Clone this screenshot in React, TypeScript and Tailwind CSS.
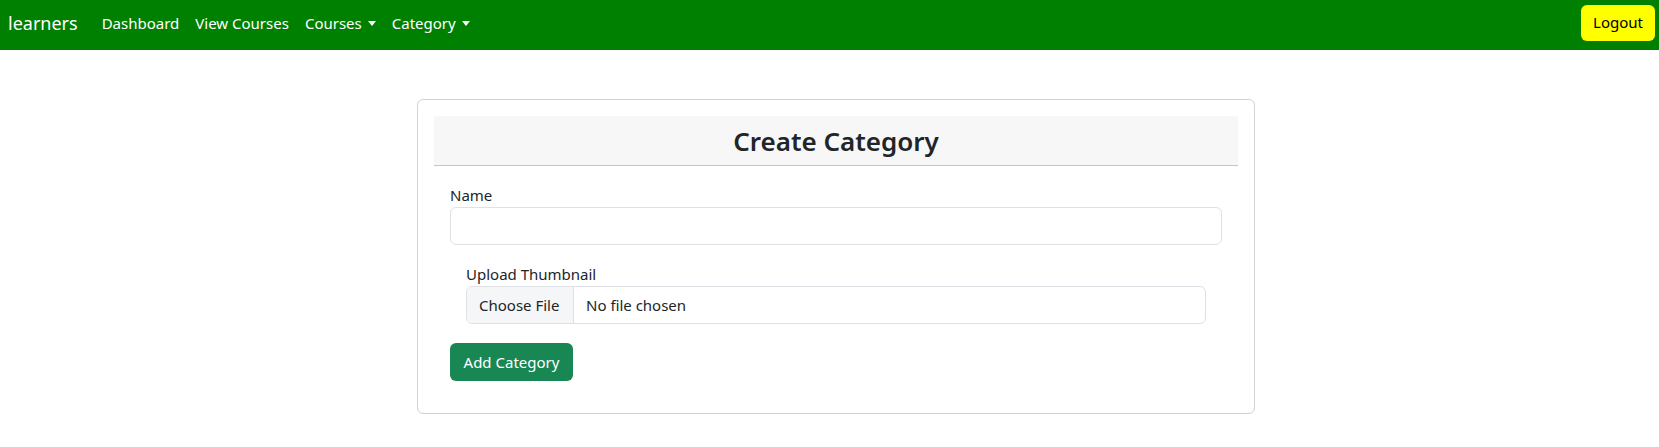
import React from 'react';

const Caret: React.FC = () => (
  <span className="ml-[6px] inline-block align-[3px] border-x-[4px] border-t-[5px] border-x-transparent border-t-white" />
);

const App: React.FC = () => {
  const links = [
    { label: 'Dashboard', dropdown: false },
    { label: 'View Courses', dropdown: false },
    { label: 'Courses', dropdown: true },
    { label: 'Category', dropdown: true },
  ];

  return (
    <div className="min-h-screen bg-white text-[#212529] font-['Noto_Sans',sans-serif]">
      {/* navbar */}
      <nav className="h-[50px] bg-[#008000] flex items-center pl-2 pr-1 pb-[5px]">
        <span className="text-white text-[18px] leading-[30px] mr-4">learners</span>
        <ul className="flex items-center">
          {links.map((l) => (
            <li key={l.label} className="px-2 text-white text-[15px] leading-6 whitespace-nowrap">
              {l.label}
              {l.dropdown && <Caret />}
            </li>
          ))}
        </ul>
        <button className="ml-auto h-9 w-[74px] rounded-md bg-[#ffff00] text-black text-[15px]">
          Logout
        </button>
      </nav>

      {/* card */}
      <div className="mt-[49px] ml-[417px] w-[838px] border border-[#d3d3d3] rounded-md p-4">
        <div className="h-[50px] bg-[#f7f7f7] border-b border-[#c4c4c4] flex items-center justify-center">
          <h3 className="text-[26px] font-semibold leading-none">Create Category</h3>
        </div>
        <div className="pt-[17px] px-4 pb-4">
          <label className="block text-[15px] leading-6">Name</label>
          <div className="h-[38px] border border-[#dee2e6] rounded-md bg-white" />

          <div className="mt-[17px] px-4">
            <label className="block text-[15px] leading-6">Upload Thumbnail</label>
            <div className="h-[38px] border border-[#dee2e6] rounded-md flex overflow-hidden text-[15px]">
              <div className="w-[107px] bg-[#f5f6f7] border-r border-[#dee2e6] flex items-center pl-[12px]">
                Choose File
              </div>
              <div className="flex items-center pl-[12px]">No file chosen</div>
            </div>
          </div>

          <button className="mt-[19px] h-[38px] w-[123px] rounded-md bg-[#198754] text-white text-[15px]">
            Add Category
          </button>
        </div>
      </div>
    </div>
  );
};

export default App;
